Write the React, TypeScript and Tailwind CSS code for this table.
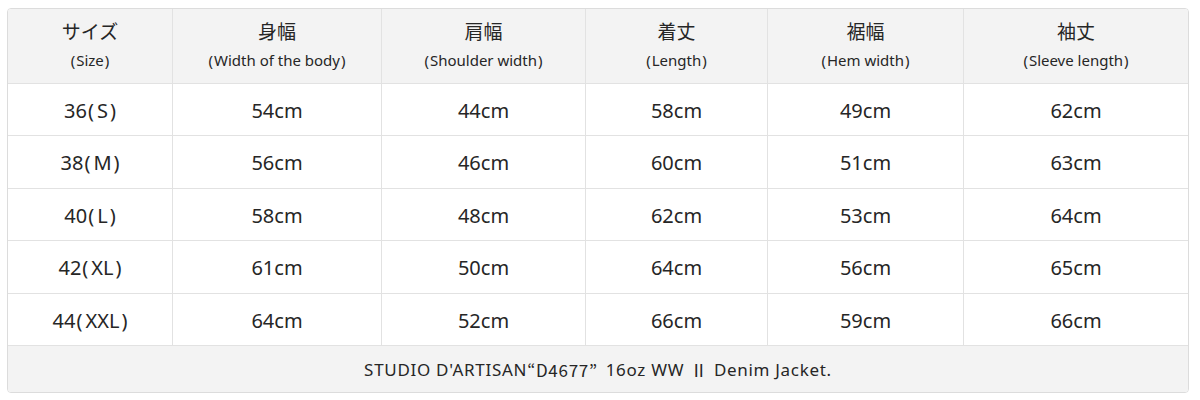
import React from "react";

const headers = [
  ["サイズ", "(Size)"],
  ["身幅", "(Width of the body)"],
  ["肩幅", "(Shoulder width)"],
  ["着丈", "(Length)"],
  ["裾幅", "(Hem width)"],
  ["袖丈", "(Sleeve length)"],
];

const rows = [
  ["36(S)", "54cm", "44cm", "58cm", "49cm", "62cm"],
  ["38(M)", "56cm", "46cm", "60cm", "51cm", "63cm"],
  ["40(L)", "58cm", "48cm", "62cm", "53cm", "64cm"],
  ["42(XL)", "61cm", "50cm", "64cm", "56cm", "65cm"],
  ["44(XXL)", "64cm", "52cm", "66cm", "59cm", "66cm"],
];

const rowHeights = ["h-[52px]", "h-[53px]", "h-[52px]", "h-[53px]", "h-[52px]"];

function Paren({ text, pad }: { text: string; pad: string }) {
  const parts = text.split(/([()])/).filter((p) => p !== "");
  return (
    <>
      {parts.map((p, i) =>
        p === "(" ? (
          <span key={i} className={pad === "lg" ? "ml-[1px] mr-[3px]" : "mr-[1px]"}>
            (
          </span>
        ) : p === ")" ? (
          <span key={i} className={pad === "lg" ? "ml-[2px]" : "ml-[1px]"}>
            )
          </span>
        ) : (
          <span key={i}>{p}</span>
        )
      )}
    </>
  );
}

export default function App() {
  return (
    <div
      className="w-[1200px] h-[400px] bg-white pt-[8px] pl-[7px] text-[#262626]"
      style={{ fontFamily: '"Noto Sans", "Noto Sans CJK JP", sans-serif' }}
    >
      <div className="w-[1182px] border border-[#dcdcdc] rounded-[4px] overflow-hidden">
        <div className="grid grid-cols-[164px_209px_204px_182px_196px_225px]">
          {headers.map(([jp, en], i) => (
            <div
              key={i}
              className={`h-[75px] bg-[#f3f3f3] border-b border-[#e2e2e2] flex flex-col items-center justify-center ${
                i > 0 ? "border-l" : ""
              }`}
            >
              <div className="text-[19px] leading-[24px] mt-[-2px]">{jp}</div>
              <div className="text-[15px] leading-[22px] mt-[5px]">
                <Paren text={en} pad="sm" />
              </div>
            </div>
          ))}
          {rows.map((r, ri) =>
            r.map((c, ci) => (
              <div
                key={`${ri}-${ci}`}
                className={`${rowHeights[ri]} border-b border-[#e2e2e2] flex items-center justify-center text-[20px] pt-[2px] ${
                  ci > 0 ? "border-l" : ""
                }`}
              >
                <Paren text={c} pad="lg" />
              </div>
            ))
          )}
        </div>
        <div className="h-[46px] bg-[#f3f3f3] flex items-center justify-center text-[17px] tracking-[0.7px] pt-[1px]">
          <span>STUDIO D'ARTISAN</span>
          <span style={{ fontFamily: '"Noto Sans CJK JP", sans-serif' }}>“D4677”</span>
          <span className="ml-[8px]">16oz WW</span>
          <span className="mx-[6px]" style={{ fontFamily: '"Noto Sans CJK JP", sans-serif' }}>
            Ⅱ
          </span>
          <span>Denim Jacket.</span>
        </div>
      </div>
    </div>
  );
}
